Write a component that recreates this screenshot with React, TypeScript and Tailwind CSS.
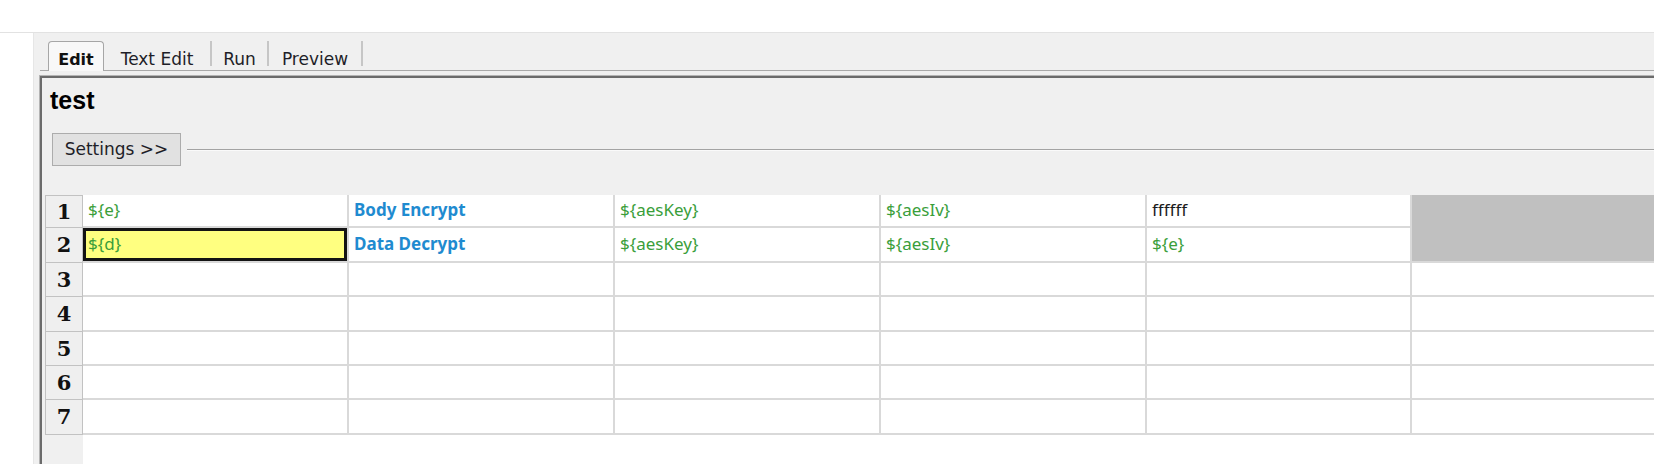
import React from "react";

type Cell = { t: string; kind: "g" | "b" | "d" | "" };

const rowH = [33, 35, 34, 35, 34, 34, 35];

const row1: Cell[] = [
  { t: "${e}", kind: "g" },
  { t: "Body Encrypt", kind: "b" },
  { t: "${aesKey}", kind: "g" },
  { t: "${aesIv}", kind: "g" },
  { t: "ffffff", kind: "d" },
];
const row2: Cell[] = [
  { t: "${d}", kind: "g" },
  { t: "Data Decrypt", kind: "b" },
  { t: "${aesKey}", kind: "g" },
  { t: "${aesIv}", kind: "g" },
  { t: "${e}", kind: "g" },
];

function Txt({ c }: { c: Cell }) {
  if (c.kind === "g") return <span className="text-[#3a9e3a]">{c.t}</span>;
  if (c.kind === "b") return <span className="text-[#1f8bd0] font-bold">{c.t}</span>;
  if (c.kind === "d") return <span className="text-[#1a1a1a]">{c.t}</span>;
  return null;
}

const cellCls =
  "border-r-2 border-b-2 border-[#d9d9d9] flex items-center pl-[5px] pb-[2px] whitespace-nowrap overflow-hidden";

export default function App() {
  return (
    <div className="w-[1654px] h-[464px] overflow-hidden bg-white flex flex-col font-['DejaVu_Sans',sans-serif]">
      <div className="h-[32px] bg-white" />
      <div className="h-px bg-[#e2e2e2]" />
      <div className="flex flex-1 min-h-0">
        <div className="w-[33px] bg-white" />
        <div className="flex-1 bg-[#f0f0f0] border-l border-[#e6e6e6] flex flex-col min-w-0">
          {/* Tabs */}
          <div className="ml-[6px] h-[38px] flex items-end">
            <div className="w-[8px] h-full border-b border-[#a9a9a9]" />
            <div className="w-[56px] h-[30px] border-t border-l border-r border-[#a6a6a6] rounded-t-[4px] bg-[#f8f8f8] pt-[8px] flex justify-center">
              <span className="text-[16px] leading-[19px] font-bold text-[#111]">Edit</span>
            </div>
            <div className="flex-1 h-full border-b border-[#a9a9a9] pt-[8px] flex items-start text-[17px] leading-[19px] text-[#1e1e28]">
              <div className="w-[106px] pt-[9px] text-center">Text Edit</div>
              <div className="w-[2px] h-[25px] bg-[#c6c6c6]" />
              <div className="w-[55px] pt-[9px] text-center">Run</div>
              <div className="w-[2px] h-[25px] bg-[#c6c6c6]" />
              <div className="w-[92px] pt-[9px] text-center">Preview</div>
              <div className="w-[2px] h-[25px] bg-[#c6c6c6]" />
            </div>
          </div>

          {/* Frame */}
          <div className="ml-[5px] mt-[4px] flex-1 min-h-0 flex flex-col border-t border-l border-[#b4b4b4]">
            <div className="flex-1 min-h-0 flex flex-col border-t-2 border-l-2 border-[#6b6b6b]">
              <div className="pl-[8px] pt-[8px] text-[25px] leading-[28px] font-bold text-black font-['Liberation_Sans',sans-serif]">
                test
              </div>

              <div className="mt-[19px] pl-[10px] flex items-center">
                <div className="w-[129px] h-[33px] border border-[#acacac] bg-[#e1e1e1] flex items-center justify-center text-[17px] text-[#1e1e28]">
                  Settings &gt;&gt;
                </div>
                <div className="ml-[6px] flex-1 h-[2px] border-t border-[#a3a3a3] border-b border-b-[#fafafa]" />
              </div>

              {/* Table area */}
              <div className="mt-[29px] flex flex-1 min-h-0">
                <div className="ml-[3px] w-[38px] flex flex-col">
                  {rowH.map((h, i) => (
                    <div
                      key={i}
                      style={{ height: h }}
                      className={`bg-[#efefef] border-l border-r border-b border-[#c2c2c2] ${
                        i === 0 ? "border-t" : ""
                      } flex items-center justify-center text-[21px] font-bold text-[#111] font-['DejaVu_Serif',serif]`}
                    >
                      {i + 1}
                    </div>
                  ))}
                </div>
                <div className="flex-1 bg-white overflow-hidden min-w-0">
                  <div className="grid grid-cols-[266px_266px_266px_266px_265px_266px] grid-rows-[33px_35px_34px_35px_34px_34px_35px] w-[1595px] text-[17px] font-['Noto_Sans',sans-serif]">
                    {row1.map((c, i) => (
                      <div key={"a" + i} className={cellCls}>
                        <Txt c={c} />
                      </div>
                    ))}
                    <div className="row-span-2 bg-[#c0c0c0] border-b-2 border-[#d9d9d9]" />
                    {row2.map((c, i) =>
                      i === 0 ? (
                        <div key={"b" + i} className="border-r-2 border-b-2 border-[#d9d9d9]">
                          <div className="w-full h-full border-[3px] border-[#141414] bg-[#ffff80] pl-[2px] pb-[2px] flex items-center">
                            <Txt c={c} />
                          </div>
                        </div>
                      ) : (
                        <div key={"b" + i} className={cellCls}>
                          <Txt c={c} />
                        </div>
                      )
                    )}
                    {Array.from({ length: 30 }).map((_, i) => (
                      <div key={"c" + i} className={cellCls} />
                    ))}
                  </div>
                </div>
              </div>
            </div>
          </div>
        </div>
      </div>
    </div>
  );
}
